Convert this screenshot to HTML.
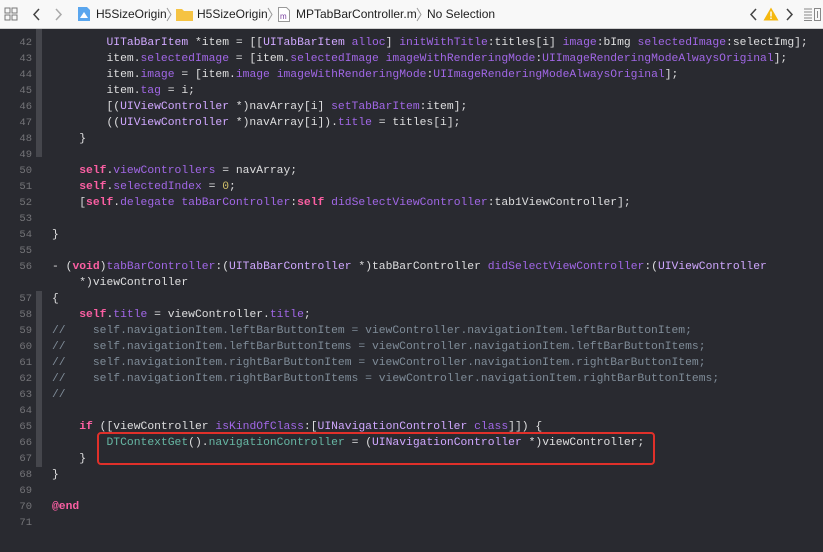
<!DOCTYPE html>
<html><head><meta charset="utf-8"><style>
body{margin:0;width:823px;height:552px;overflow:hidden;background:#292a30;font-family:"Liberation Mono",monospace;}
#tb{position:absolute;left:0;top:0;width:823px;height:28px;background:#f8f8f8;border-bottom:1px solid #d0d0d0;font-family:"Liberation Sans",sans-serif;font-size:12px;color:#222;z-index:2}
#tb span{position:absolute;top:7px;white-space:nowrap}
.ln{position:absolute;left:0;width:32px;text-align:right;color:#747478;font-size:10.5px;height:16px;line-height:16px}
.cd{position:absolute;left:52px;font-size:11.35px;color:#dfdfe0;white-space:pre;height:16px;line-height:16px}
.k{color:#fc5fa3;font-weight:bold}.t{color:#d0a8ff}.m{color:#a167e6}.p{color:#67b7a4}.c{color:#7f8c98}.n{color:#d0bf69}
.st{position:absolute;left:36px;width:6px;background:#45464c}
</style></head><body>
<div id="tb">
<svg style="position:absolute;left:4px;top:7px" width="14" height="14"><rect x="1" y="1" width="5" height="5" fill="none" stroke="#777"/><rect x="8" y="1" width="5" height="5" fill="none" stroke="#777"/><rect x="1" y="8" width="5" height="5" fill="none" stroke="#777"/><rect x="8" y="8" width="5" height="5" fill="none" stroke="#777"/></svg>
<svg style="position:absolute;left:32px;top:8px" width="10" height="13"><path d="M7 1L2 6.5L7 12" fill="none" stroke="#444" stroke-width="1.5"/></svg>
<svg style="position:absolute;left:54px;top:8px" width="10" height="13"><path d="M2 1L7 6.5L2 12" fill="none" stroke="#aaa" stroke-width="1.5"/></svg>
<svg style="position:absolute;left:77px;top:6px" width="14" height="16"><path d="M1 1h9l3 3v11H1z" fill="#5aa6ee"/><path d="M3 12l4-6 4 6z" fill="#fff"/></svg>
<span style="left:96px">H5SizeOrigin</span>
<svg style="position:absolute;left:166px;top:7px" width="6" height="15"><path d="M1 1L5 7.5L1 14" fill="none" stroke="#999"/></svg>
<svg style="position:absolute;left:176px;top:8px" width="17" height="13"><path d="M0 1h6l2 2h9v10H0z" fill="#f5c343"/></svg>
<span style="left:197px">H5SizeOrigin</span>
<svg style="position:absolute;left:267px;top:7px" width="6" height="15"><path d="M1 1L5 7.5L1 14" fill="none" stroke="#999"/></svg>
<svg style="position:absolute;left:278px;top:7px" width="12" height="15"><path d="M0.5 0.5h8l3 3v11h-11z" fill="#fff" stroke="#999"/><text x="2" y="12" font-size="8" fill="#7a3fa0" font-family="Liberation Sans">m</text></svg>
<span style="left:296px">MPTabBarController.m</span>
<svg style="position:absolute;left:416px;top:7px" width="6" height="15"><path d="M1 1L5 7.5L1 14" fill="none" stroke="#999"/></svg>
<span style="left:427px">No Selection</span>
<svg style="position:absolute;left:749px;top:8px" width="10" height="13"><path d="M7 1L2 6.5L7 12" fill="none" stroke="#444" stroke-width="1.5"/></svg>
<svg style="position:absolute;left:763px;top:7px" width="16" height="14"><path d="M8 0.5L15.5 13.5H0.5z" fill="#f5b80f"/><rect x="7.3" y="4.5" width="1.4" height="5" fill="#fff"/><rect x="7.3" y="10.5" width="1.4" height="1.5" fill="#fff"/></svg>
<svg style="position:absolute;left:785px;top:8px" width="10" height="13"><path d="M2 1L7 6.5L2 12" fill="none" stroke="#444" stroke-width="1.5"/></svg>
<svg style="position:absolute;left:804px;top:8px" width="19" height="13"><g stroke="#888"><path d="M0 1h8M0 4h8M0 7h8M0 10h8M0 12.5h8"/><rect x="10.5" y="0.5" width="6" height="12" fill="none"/><path d="M13.5 3v7"/></g></svg>
</div>
<div class="st" style="top:29px;height:128px"></div>
<div class="st" style="top:291px;height:176px"></div>

<div class="ln" style="top:19px">41</div>
<div class="ln" style="top:35px">42</div><div class="cd" style="top:35px">        <span class="t">UITabBarItem</span> *item = [[<span class="t">UITabBarItem</span> <span class="m">alloc</span>] <span class="m">initWithTitle</span>:titles[i] <span class="m">image</span>:bImg <span class="m">selectedImage</span>:selectImg];</div>
<div class="ln" style="top:51px">43</div><div class="cd" style="top:51px">        item.<span class="m">selectedImage</span> = [item.<span class="m">selectedImage</span> <span class="m">imageWithRenderingMode</span>:<span class="m">UIImageRenderingModeAlwaysOriginal</span>];</div>
<div class="ln" style="top:67px">44</div><div class="cd" style="top:67px">        item.<span class="m">image</span> = [item.<span class="m">image</span> <span class="m">imageWithRenderingMode</span>:<span class="m">UIImageRenderingModeAlwaysOriginal</span>];</div>
<div class="ln" style="top:83px">45</div><div class="cd" style="top:83px">        item.<span class="m">tag</span> = i;</div>
<div class="ln" style="top:99px">46</div><div class="cd" style="top:99px">        [(<span class="t">UIViewController</span> *)navArray[i] <span class="m">setTabBarItem</span>:item];</div>
<div class="ln" style="top:115px">47</div><div class="cd" style="top:115px">        ((<span class="t">UIViewController</span> *)navArray[i]).<span class="m">title</span> = titles[i];</div>
<div class="ln" style="top:131px">48</div><div class="cd" style="top:131px">    }</div>
<div class="ln" style="top:147px">49</div>
<div class="ln" style="top:163px">50</div><div class="cd" style="top:163px">    <span class="k">self</span>.<span class="m">viewControllers</span> = navArray;</div>
<div class="ln" style="top:179px">51</div><div class="cd" style="top:179px">    <span class="k">self</span>.<span class="m">selectedIndex</span> = <span class="n">0</span>;</div>
<div class="ln" style="top:195px">52</div><div class="cd" style="top:195px">    [<span class="k">self</span>.<span class="m">delegate</span> <span class="m">tabBarController</span>:<span class="k">self</span> <span class="m">didSelectViewController</span>:tab1ViewController];</div>
<div class="ln" style="top:211px">53</div>
<div class="ln" style="top:227px">54</div><div class="cd" style="top:227px">}</div>
<div class="ln" style="top:243px">55</div>
<div class="ln" style="top:259px">56</div><div class="cd" style="top:259px">- (<span class="k">void</span>)<span class="m">tabBarController</span>:(<span class="t">UITabBarController</span> *)tabBarController <span class="m">didSelectViewController</span>:(<span class="t">UIViewController</span></div>
<div class="cd" style="top:275px">    *)viewController</div>
<div class="ln" style="top:291px">57</div><div class="cd" style="top:291px">{</div>
<div class="ln" style="top:307px">58</div><div class="cd" style="top:307px">    <span class="k">self</span>.<span class="m">title</span> = viewController.<span class="m">title</span>;</div>
<div class="ln" style="top:323px">59</div><div class="cd c" style="top:323px">//    self.navigationItem.leftBarButtonItem = viewController.navigationItem.leftBarButtonItem;</div>
<div class="ln" style="top:339px">60</div><div class="cd c" style="top:339px">//    self.navigationItem.leftBarButtonItems = viewController.navigationItem.leftBarButtonItems;</div>
<div class="ln" style="top:355px">61</div><div class="cd c" style="top:355px">//    self.navigationItem.rightBarButtonItem = viewController.navigationItem.rightBarButtonItem;</div>
<div class="ln" style="top:371px">62</div><div class="cd c" style="top:371px">//    self.navigationItem.rightBarButtonItems = viewController.navigationItem.rightBarButtonItems;</div>
<div class="ln" style="top:387px">63</div><div class="cd c" style="top:387px">//</div>
<div class="ln" style="top:403px">64</div>
<div class="ln" style="top:419px">65</div><div class="cd" style="top:419px">    <span class="k">if</span> ([viewController <span class="m">isKindOfClass</span>:[<span class="t">UINavigationController</span> <span class="m">class</span>]]) {</div>
<div class="ln" style="top:435px">66</div><div class="cd" style="top:435px">        <span class="p">DTContextGet</span>().<span class="p">navigationController</span> = (<span class="t">UINavigationController</span> *)viewController;</div>
<div class="ln" style="top:451px">67</div><div class="cd" style="top:451px">    }</div>
<div class="ln" style="top:467px">68</div><div class="cd" style="top:467px">}</div>
<div class="ln" style="top:483px">69</div>
<div class="ln" style="top:499px">70</div><div class="cd" style="top:499px"><span class="k">@end</span></div>
<div class="ln" style="top:515px">71</div>
<div style="position:absolute;left:97px;top:432px;width:554px;height:29px;border:2px solid #e0302a;border-radius:4px"></div>
</body></html>
